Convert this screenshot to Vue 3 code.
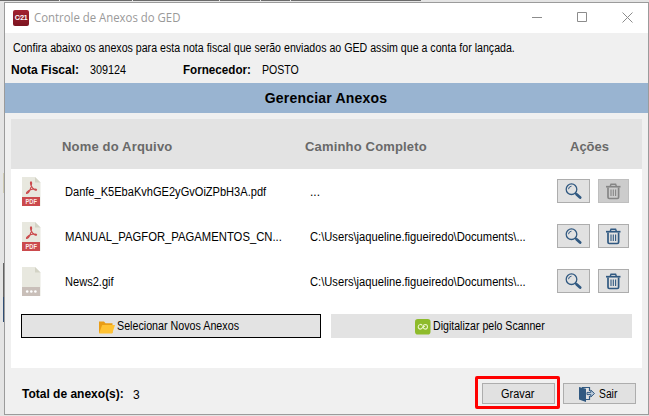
<script setup>
const files = [
  { name: 'Danfe_K5EbaKvhGE2yGvOiZPbH3A.pdf', path: '...', kind: 'pdf', locked: true, key: 'danfe' },
  { name: 'MANUAL_PAGFOR_PAGAMENTOS_CN...', path: 'C:\\Users\\jaqueline.figueiredo\\Documents\\...', kind: 'pdf', locked: false, key: 'manual' },
  { name: 'News2.gif', path: 'C:\\Users\\jaqueline.figueiredo\\Documents\\...', kind: 'other', locked: false, key: 'news' },
]
</script>

<template>
  <div class="desktop">
    <div class="strip"><i v-for="n in 6" :key="n" :class="'seg s' + n"></i></div>
    <div class="edge"><i class="e1"></i><i class="e2"></i><i class="e3"></i></div>
    <section class="window">
      <header class="titlebar">
        <span class="app-icon">C<b>⁄</b>21</span>
        <span class="title"><span>Controle de Anexos do GED</span></span>
        <svg class="controls" width="110" height="30" viewBox="0 0 110 30" fill="none" stroke="#8c8c8c">
          <path d="M1 14.500h10M46.500 9.500h9v9h-9zM91.500 9.500l10 10M101.500 9.500l-10 10" />
        </svg>
      </header>
      <p class="intro"><span>Confira abaixo os anexos para esta nota fiscal que serão enviados ao GED assim que a conta for lançada.</span></p>
      <div class="meta">
        <b class="nf">Nota Fiscal:</b><span class="num"><span>309124</span></span>
        <b class="forn"><span>Fornecedor:</span></b><span class="posto"><span>POSTO</span></span>
      </div>
      <h1 class="banner"><span>Gerenciar Anexos</span></h1>
      <main class="panel">
        <div class="thead">
          <span class="h-name">Nome do Arquivo</span>
          <span class="h-path">Caminho Completo</span>
          <span class="h-act">Ações</span>
        </div>
        <div v-for="f in files" :key="f.key" class="row">
          <svg class="file" width="19" height="29" viewBox="0 0 19 29">
            <path d="M0 0h13l5.500 5.500V29H0z" fill="#e8e8df" />
            <path d="M13 0l5.500 5.500H13z" fill="#d3d3c5" />
            <template v-if="f.kind === 'pdf'">
              <path d="M0 20h18v9H0z" fill="#cb4a4d" />
              <path d="M5 16.500c2-.5 4.200-5 4.600-10 .1-2.200-1.300-2-1.100-.1.300 3 2.800 6.100 5 6.800 1.600.3 1.400-1.200-.5-1.200-3 0-6.500 1.500-8 3.100-.7 1-.6 1.500 0 1.400z" fill="none" stroke="#cb4a4d" stroke-width="1.150" />
              <text x="3.400" y="27.300" class="pdf" textLength="11.500" lengthAdjust="spacingAndGlyphs">PDF</text>
            </template>
            <template v-else>
              <path d="M0 20h18v9H0z" fill="#c9bfb9" />
              <circle cx="5.200" cy="24.500" r="1.300" fill="#fff" /><circle cx="9.300" cy="24.500" r="1.300" fill="#fff" /><circle cx="13.400" cy="24.500" r="1.300" fill="#fff" />
            </template>
          </svg>
          <span class="name"><span :class="f.key">{{ f.name }}</span></span>
          <span class="path"><span :class="{ long: f.path.length > 3 }">{{ f.path }}</span></span>
          <button class="act view" aria-label="Visualizar">
            <svg width="17" height="17" viewBox="0 0 17 17" fill="none" stroke="#315981">
              <circle cx="6.500" cy="6.200" r="5.300" stroke-width="1.300" />
              <path d="M3.500 6.200q.2-2.800 3-3" stroke-width="1" />
              <path d="M10.300 10.100l1.800 1.800" stroke-width="1.500" /><path d="M11.800 11.500l3.300 3.100" stroke-width="2.800" stroke-linecap="round" />
            </svg>
          </button>
          <button class="act del" :disabled="f.locked" aria-label="Excluir">
            <svg width="15" height="17" viewBox="0 0 15 17" fill="none" stroke="currentColor">
              <path d="M0 3.700h14.500" stroke-width="1.700" />
              <path d="M4.200 3.500l.8-2.300h4.600l.8 2.300" stroke-width="1.400" />
              <path d="M2 4.500v9.700q0 1.300 1.300 1.300h8q1.300 0 1.300-1.300V4.500" stroke-width="1.700" />
              <path d="M5 6.500v6.500M7.300 6.500v6.500M9.600 6.500v6.500" stroke-width="1.100" />
            </svg>
          </button>
        </div>
        <div class="sources">
          <button class="select">
            <svg width="16" height="13" viewBox="0 0 16 13">
              <path d="M0 .5h5l1.500 1.700h7V12H0z" fill="#e99d16" />
              <path d="M3.200 4H16l-2.800 8.500H0z" fill="#ffc233" />
            </svg>
            <span class="sel-text">Selecionar Novos Anexos</span>
          </button>
          <button class="scan">
            <svg width="16" height="16" viewBox="0 0 16 16">
              <rect width="15.500" height="15.500" rx="2.800" fill="#8ebb2b" />
              <path d="M7.300 6.300q-1-1-2-.9-2.100.3-2.100 2.400 0 2.300 2.200 2.300 1.700 0 2.300-2.200.6-2.500 2.700-2.500 2.100.1 2.100 2.400t-2.100 2.300q-1.400 0-2-1V7.500h1.500" fill="none" stroke="#eaf5c8" stroke-width="1.050" />
            </svg>
            <span class="scan-text">Digitalizar pelo Scanner</span>
          </button>
        </div>
      </main>
      <footer class="foot">
        <b class="total">Total de anexo(s):</b><span class="count">3</span>
        <div class="mark"><button class="cmd"><span class="gravar">Gravar</span></button></div>
        <button class="cmd exit">
          <svg width="17" height="16" viewBox="0 0 17 16">
            <path d="M3 1.500h7.500V5M10.500 10v3.500H6" fill="none" stroke="#315981" stroke-width="1.200" />
            <path d="M0 1l7 1.800V16L0 13.500z" fill="#315981" />
            <path d="M8 6.400h3.800V4l3.700 3.500-3.700 3.500V8.600H8z" fill="#b9c9d9" stroke="#315981" stroke-width="1" />
          </svg>
          <span class="sair">Sair</span>
        </button>
      </footer>
    </section>
  </div>
</template>

<style>
body { overflow: hidden; }
</style>

<style scoped>
* { box-sizing: border-box; }
.desktop { width: 649px; height: 416px; background: #e4e4e4; position: relative; padding: 2px 0 0 4px; font: 12px/14px "Liberation Sans", Arial, sans-serif; color: #000; overflow: hidden; white-space: nowrap; }
.strip { position: absolute; left: 0; top: 0; width: 649px; height: 1px; display: flex; gap: 1px; background: #e4e4e4; }
.seg { background: #6b6b6b; height: 1px; }
.s1 { width: 59px; } .s2 { width: 72px; } .s3 { width: 86px; } .s4 { width: 40px; } .s5 { width: 29px; } .s6 { width: 130px; }
.edge { position: absolute; left: 3px; top: 0; width: 1px; height: 416px; padding-top: 173px; }
.edge i { display: block; width: 1px; }
.e1 { height: 20px; background: #cfcbb3; }
.e2 { height: 34px; margin-top: 70px; background: #626262; }
.e3 { height: 25px; background: #304d73; }
.window { width: 645px; height: 413px; border: 1px solid #9b9b9b; background: #f0f0f0; display: flex; flex-direction: column; }
.titlebar { height: 30px; background: #fff; display: flex; align-items: center; padding-left: 8px; color: #999; }
.app-icon { width: 16px; height: 16px; border-radius: 2px; background: linear-gradient(#a32331, #7c1420); color: #fff; font: bold 7px/16px "Liberation Sans", sans-serif; text-align: center; letter-spacing: -.4px; }
.app-icon b { font-weight: 400; }
.title { margin-left: 5px; font: 12px/14px "Open Sans", sans-serif; flex: 1; }
.controls { margin-right: 7px; flex: none; }
.intro { margin: 0; height: 26px; padding: 8px 0 0 8px; }
.meta { height: 24px; padding-top: 4px; display: flex; padding-left: 6px; }
.nf { width: 79px; } .num { width: 93px; } .forn { width: 79px; }
.banner { margin: 0; height: 30px; background: #99b4d1; display: flex; align-items: center; justify-content: center; font: bold 14px/16px "Liberation Sans", sans-serif; letter-spacing: .2px; padding-right: 1px; }
.panel { margin: 6px 6px 0; height: 249px; background: #fff; }
.thead { height: 50px; background: #e3e3e3; display: flex; align-items: center; padding: 4px 0 0 51px; font: bold 13px/15px "Liberation Sans", sans-serif; color: #696969; letter-spacing: .17px; }
.h-name { width: 243px; } .h-path { width: 265px; } .h-act { letter-spacing: 0; }
.row { height: 45px; display: flex; align-items: center; padding-left: 11px; }
.file { flex: none; margin-top: -1px; }
.pdf { font: bold 7px "Liberation Sans", sans-serif; fill: #fbe9e9; }
.name { width: 245px; padding-left: 24px; }
.path { width: 271px; padding-left: 24px; flex: none; }

/* Condensed text widths */
.title span, .intro span, .meta span span, .forn span, .name span, .path span, .sel-text, .scan-text, .gravar, .sair { display: inline-block; transform-origin: 0 50%; }
.title span { transform: scaleX(.948); }
.intro span { transform: scaleX(.885); }
.num span { transform: scaleX(.9); }
.forn span { transform: scaleX(.97); }
.posto span { transform: scaleX(.88); }
.name span { transform: scaleX(.922); }
.name .manual { transform: scaleX(.94); }
.path .long { transform: scaleX(.932); }
.sel-text { transform: scaleX(.892); }
.scan-text { transform: scaleX(.882); }
.gravar { transform: scaleX(.91); }
.sair { transform: scaleX(.86); }

button { margin: 0; padding: 0; border: 1px solid #adadad; background: #e1e1e1; font: inherit; color: #000; display: flex; align-items: center; justify-content: center; }
.act { height: 24px; flex: none; margin-bottom: 1px; }
.view { width: 33px; }
.del { width: 31px; margin-left: 8px; color: #315981; }
.del:disabled { background: #ccc; border-color: #bfbfbf; color: #858585; }
.sources { display: flex; gap: 10px; padding: 10px 10px 0; }
.sources button { height: 24px; background: #e3e3e3; justify-content: flex-start; gap: 2px; }
.sources .select { width: 300px; border-color: #000; padding-left: 77px; }
.sources .scan { width: 301px; border: 0; padding-left: 84px; }
.select svg, .scan svg { margin-top: 2px; }
.foot { flex: 1; display: flex; padding: 8px 12px 0 17px; }
.total { width: 111px; padding-top: 11px; }
.count { flex: 1; padding-top: 12px; }
.mark { width: 85px; height: 33px; border: 3px solid #f00; border-radius: 2px; padding: 4px 2px 0 4px; }
.cmd { width: 73px; height: 21px; }
.mark .cmd { justify-content: flex-start; padding-left: 18px; }
.exit { margin: 7px 0 0 3px; gap: 3px; justify-content: flex-start; padding-left: 15px; }
</style>
